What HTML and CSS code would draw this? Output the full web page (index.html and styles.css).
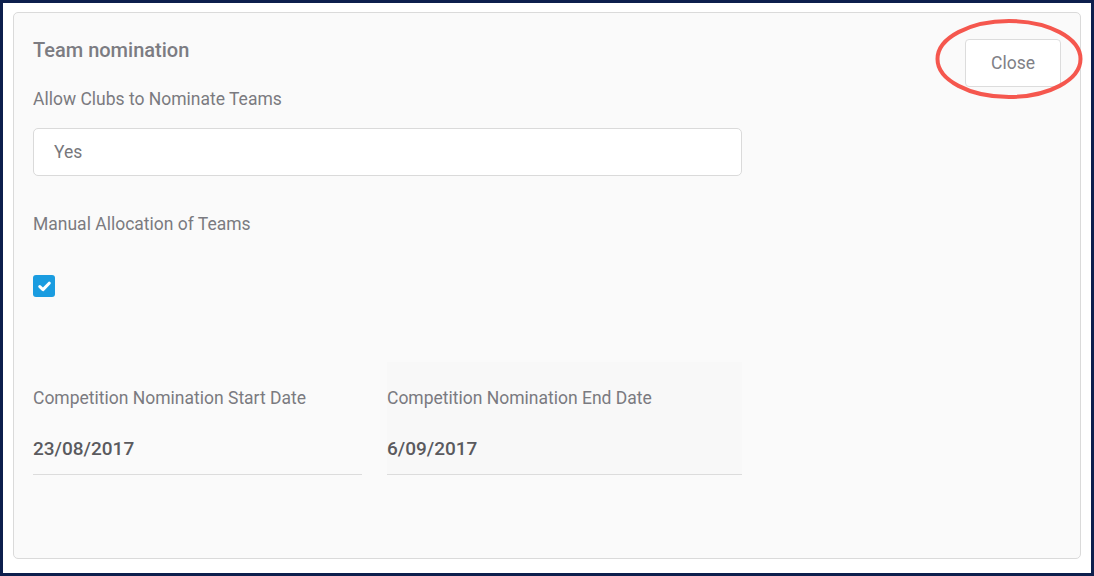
FILE: index.html
```html
<!DOCTYPE html>
<html>
<head>
<meta charset="utf-8">
<link rel="stylesheet" href="styles.css">
</head>
<body>
<div class="frame">
  <div class="card">
    <div class="header">
      <h2 class="title">Team nomination</h2>
      <button class="close-btn">Close</button>
      <svg class="highlight" width="154" height="88" viewBox="0 0 154 88">
        <ellipse cx="77" cy="44" rx="71.5" ry="38" fill="none" stroke="#f5574e" stroke-width="4"/>
      </svg>
    </div>
    <div class="label first">Allow Clubs to Nominate Teams</div>
    <div class="input">Yes</div>
    <div class="label second">Manual Allocation of Teams</div>
    <div class="checkbox">
      <svg width="13" height="11" viewBox="0 0 13 11"><path d="M1.8 5.6 L5 8.6 L11.2 2.2" fill="none" stroke="#fff" stroke-width="3" stroke-linecap="round" stroke-linejoin="round"/></svg>
    </div>
    <div class="dates">
      <div class="date-field">
        <div class="label">Competition Nomination Start Date</div>
        <div class="date-value">23/08/2017</div>
      </div>
      <div class="date-field alt">
        <div class="label">Competition Nomination End Date</div>
        <div class="date-value">6/09/2017</div>
      </div>
    </div>
  </div>
</div>
</body>
</html>
```
FILE: styles.css
```css
* { box-sizing: border-box; }
html, body { margin: 0; padding: 0; }
body {
  font-family: Roboto, "Noto Sans", "Liberation Sans", sans-serif;
  width: 1094px;
  height: 576px;
  background: #0d1f4d;
}
.frame {
  width: 1094px;
  height: 576px;
  border: 3px solid #0d1f4d;
  background: #ffffff;
  padding: 9px 10px 14px 10px;
}
.card {
  height: 547px;
  border: 1px solid #dadada;
  border-radius: 5px;
  background: #fafafa;
  padding: 25px 19px;
  position: relative;
}
.header {
  display: flex;
  justify-content: space-between;
  align-items: flex-start;
  height: 24px;
}
.title {
  margin: 0;
  font-size: 20px;
  line-height: 24px;
  font-weight: 500;
  color: #7c7c82;
}
.close-btn {
  margin-top: 1px;
  width: 96px;
  height: 48px;
  flex-shrink: 0;
  background: #fff;
  border: 1px solid #dcdcdc;
  border-radius: 4px;
  font-family: inherit;
  font-size: 17.5px;
  color: #808086;
  padding: 0;
}
.highlight {
  position: absolute;
  left: 918px;
  top: 2px;
}
.label {
  font-size: 17.5px;
  line-height: 20px;
  color: #7a7a80;
}
.label.first { margin-top: 27px; }
.input {
  margin-top: 19px;
  width: 709px;
  height: 48px;
  background: #fff;
  border: 1px solid #dadada;
  border-radius: 5px;
  padding: 0 20px;
  font-size: 17.5px;
  line-height: 46px;
  color: #77777c;
}
.label.second { margin-top: 38px; }
.checkbox {
  margin-top: 41px;
  width: 22px;
  height: 22px;
  border-radius: 3px;
  background: #1a9ce0;
  display: flex;
  align-items: center;
  justify-content: center;
}
.dates {
  margin-top: 65px;
  display: grid;
  grid-template-columns: 329px 355px;
  column-gap: 25px;
  width: 709px;
}
.date-field {
  padding-top: 26px;
  border-bottom: 1px solid #dcdcdc;
  padding-bottom: 13px;
}
.date-field.alt { background: #f8f8f8; }
.date-value {
  margin-top: 29px;
  font-size: 19px;
  line-height: 24px;
  font-weight: 500;
  color: #5a5a5e;
}
```
